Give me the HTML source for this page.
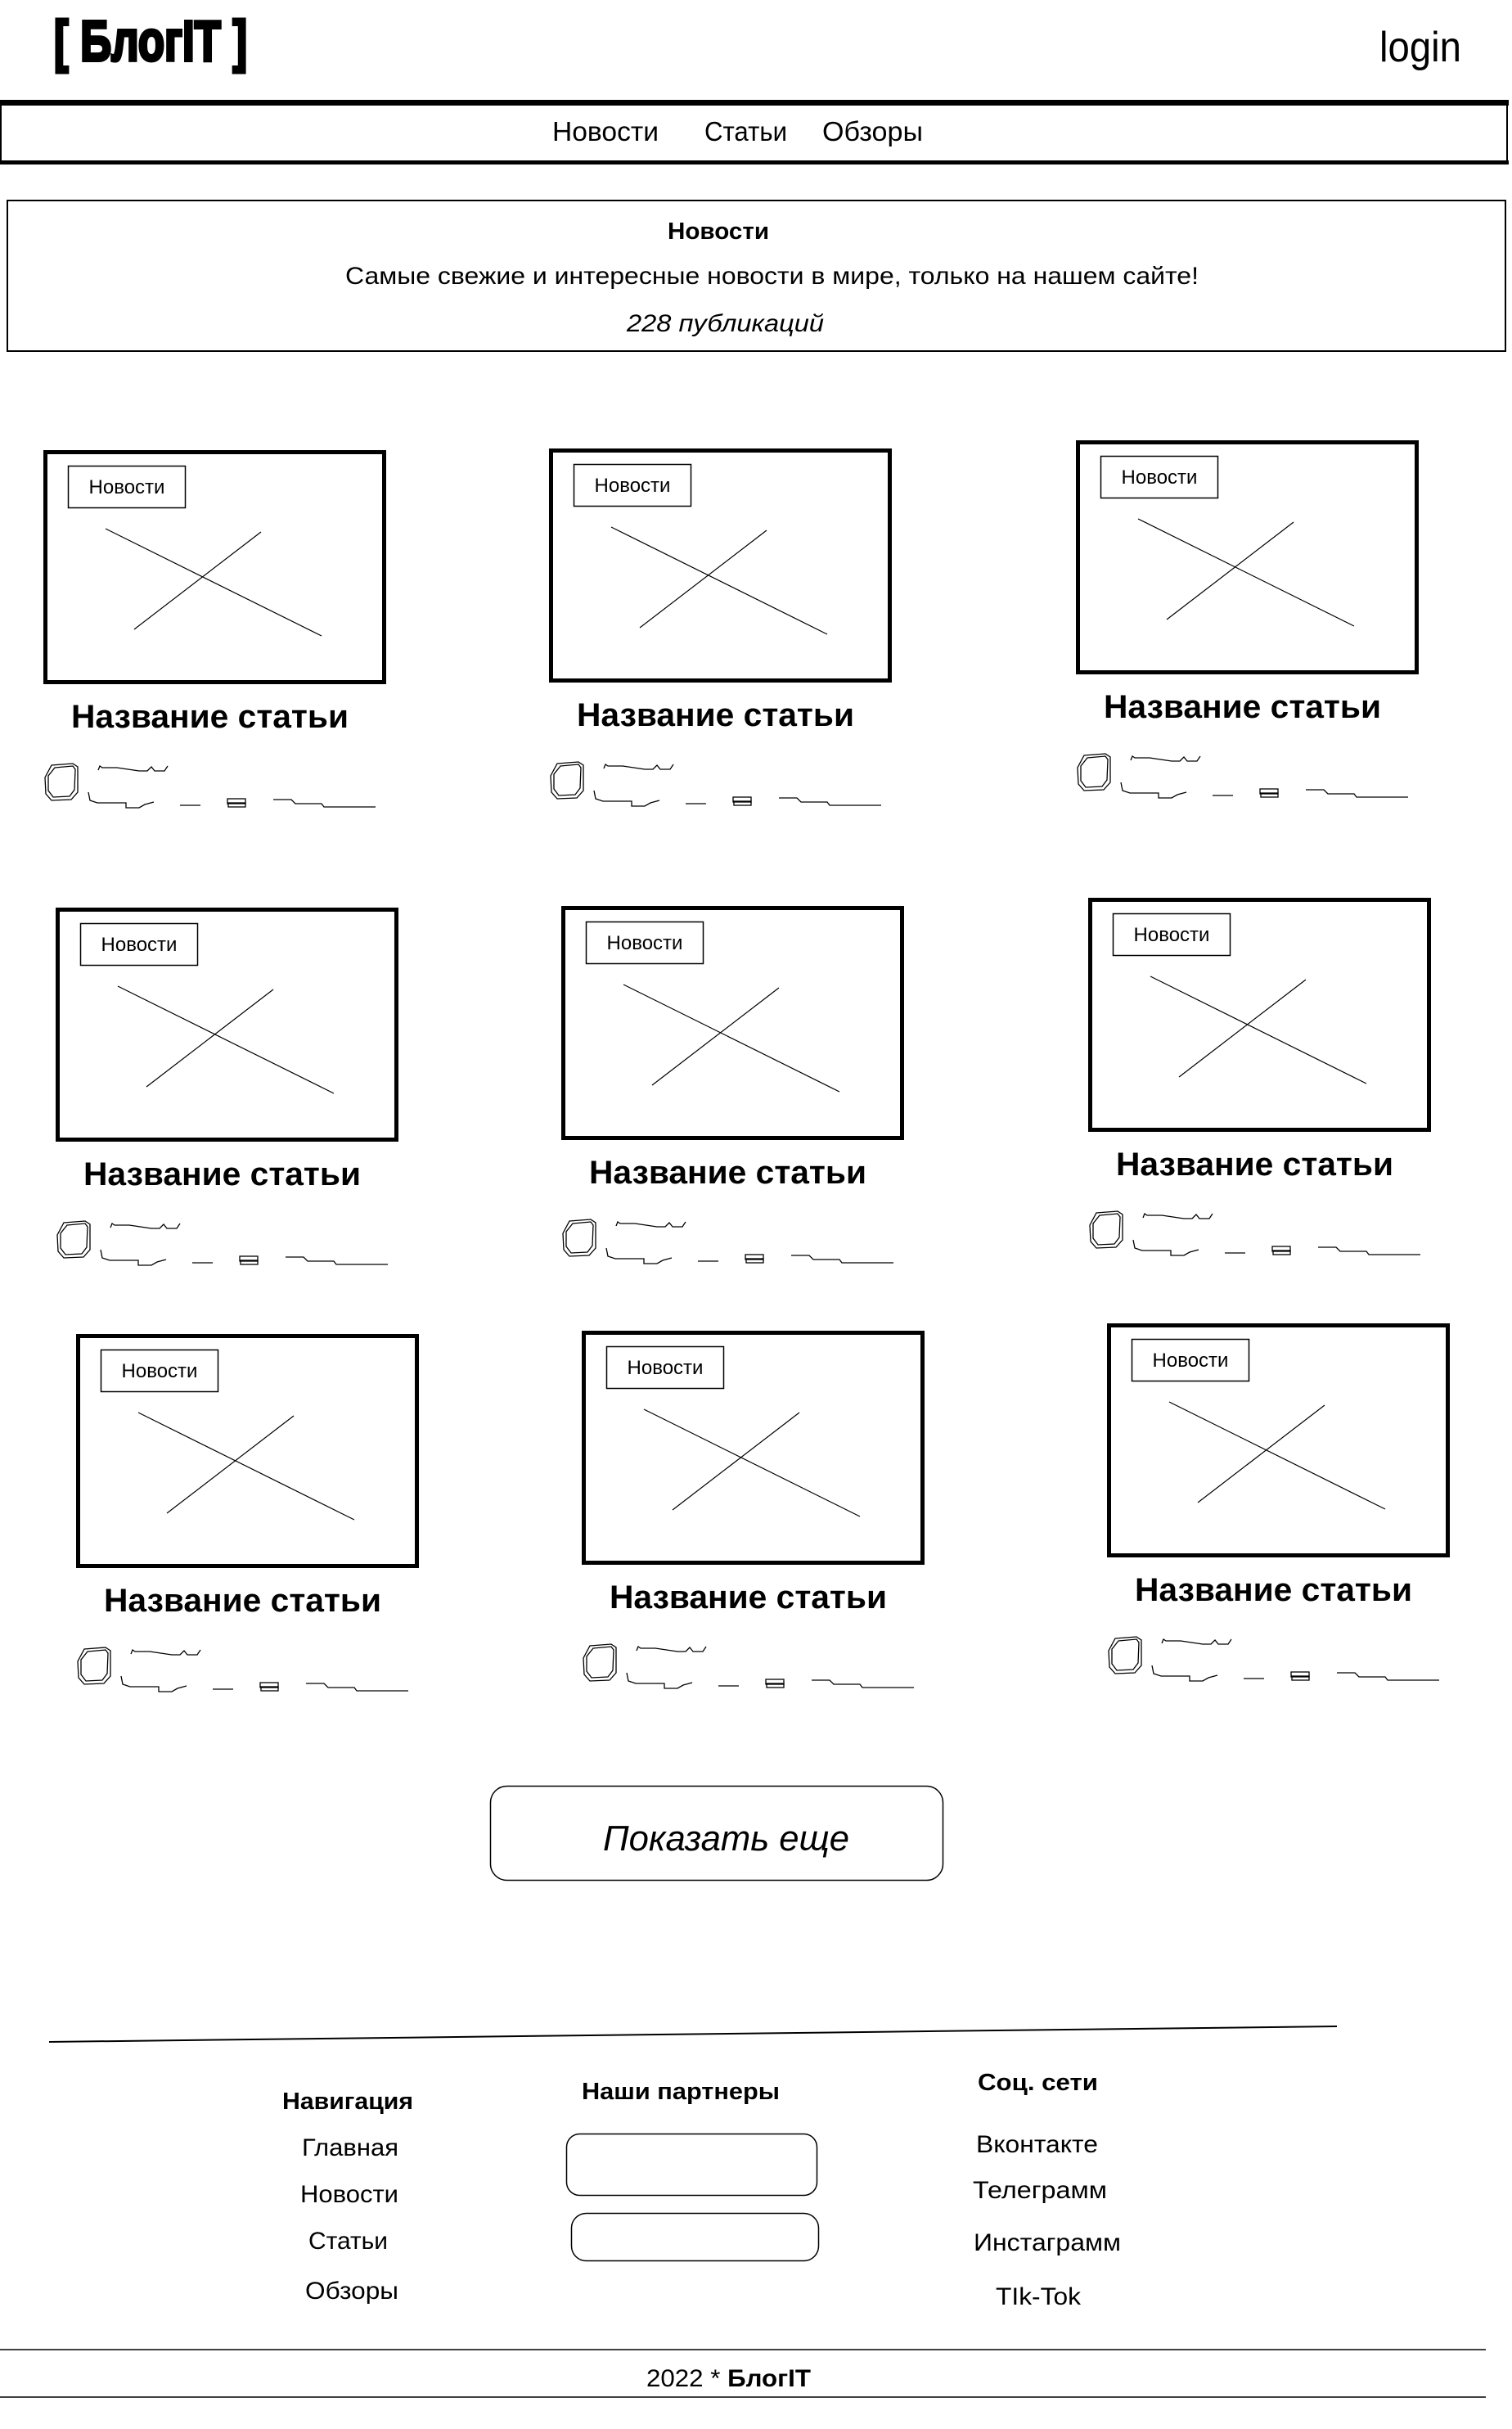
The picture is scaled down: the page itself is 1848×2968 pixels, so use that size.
<!DOCTYPE html>
<html><head><meta charset="utf-8"><style>
html,body{margin:0;padding:0;background:#fff;}
svg{display:block;font-family:"Liberation Sans","Noto Sans CJK SC",sans-serif;}
</style></head><body>
<svg width="1848" height="2968" viewBox="0 0 1848 2968" xmlns="http://www.w3.org/2000/svg">
<rect width="1848" height="2968" fill="#fff"/>
<!-- header -->
<text x="66" y="74" font-size="70" font-weight="bold" stroke="#000" stroke-width="4" stroke-linejoin="miter" textLength="236" lengthAdjust="spacingAndGlyphs">[ БлогIT ]</text>
<text x="1686" y="75" font-size="52" textLength="100" lengthAdjust="spacingAndGlyphs">login</text>
<rect x="0" y="122" width="1844" height="7" fill="#000"/>
<rect x="0" y="196" width="1844" height="5" fill="#000"/>
<rect x="0" y="122" width="2" height="79" fill="#000"/>
<rect x="1841" y="122" width="2" height="79" fill="#000"/>
<text x="675" y="172" font-size="33" textLength="130" lengthAdjust="spacingAndGlyphs">Новости</text>
<text x="861" y="172" font-size="33" textLength="101" lengthAdjust="spacingAndGlyphs">Статьи</text>
<text x="1005" y="172" font-size="33" textLength="123" lengthAdjust="spacingAndGlyphs">Обзоры</text>
<!-- info -->
<rect x="9" y="245" width="1831" height="184" fill="none" stroke="#000" stroke-width="2"/>
<text x="816" y="292" font-size="29" font-weight="bold" textLength="124" lengthAdjust="spacingAndGlyphs">Новости</text>
<text x="422" y="347" font-size="30" textLength="1043" lengthAdjust="spacingAndGlyphs">Самые свежие и интересные новости в мире, только на нашем сайте!</text>
<text x="766" y="405" font-size="30" font-style="italic" textLength="241" lengthAdjust="spacingAndGlyphs">228 публикаций</text>

<g id="cards" fill="none" stroke="#000">
<g transform="translate(53,550)">
<rect x="2.5" y="2.5" width="414" height="281" stroke-width="5"/><rect x="30.5" y="19.5" width="143" height="51" stroke-width="1.5"/>
<text x="102" y="53" font-size="24" text-anchor="middle" fill="#000" stroke="none">Новости</text>
<line x1="76" y1="96" x2="340" y2="227" stroke-width="1.2"/><line x1="266" y1="100" x2="111" y2="219" stroke-width="1.2"/>
<text x="34" y="339" font-size="40" font-weight="bold" fill="#000" stroke="none" textLength="339" lengthAdjust="spacingAndGlyphs">Название статьи</text>
<path d="M10,385 L36,383 L42,387 L42,418 L34,427 L10,428 L3,420 L2,400 Z M14,388 L36,386 L39,390 L38,415 L32,423 L12,424 L6,416 L6,398 Z" stroke-width="1.3"/>
<polyline points="67,391 69,386 72,388 90,388 117,392 127,392 132,387 136,392 148,392 152,386" stroke-width="1.3"/>
<polyline points="55,418 57,428 66,431 101,431 101,437 117,437 124,433 135,430" stroke-width="1.3"/>
<line x1="167" y1="434" x2="192" y2="434" stroke-width="1.3"/>
<rect x="225" y="426" width="22" height="6" stroke-width="1.3"/><rect x="226" y="431" width="21" height="5" stroke-width="1.3"/>
<polyline points="281,427 303,427 308,432 340,432 343,436 406,436" stroke-width="1.3"/>
</g>
<g transform="translate(671,548)">
<rect x="2.5" y="2.5" width="414" height="281" stroke-width="5"/><rect x="30.5" y="19.5" width="143" height="51" stroke-width="1.5"/>
<text x="102" y="53" font-size="24" text-anchor="middle" fill="#000" stroke="none">Новости</text>
<line x1="76" y1="96" x2="340" y2="227" stroke-width="1.2"/><line x1="266" y1="100" x2="111" y2="219" stroke-width="1.2"/>
<text x="34" y="339" font-size="40" font-weight="bold" fill="#000" stroke="none" textLength="339" lengthAdjust="spacingAndGlyphs">Название статьи</text>
<path d="M10,385 L36,383 L42,387 L42,418 L34,427 L10,428 L3,420 L2,400 Z M14,388 L36,386 L39,390 L38,415 L32,423 L12,424 L6,416 L6,398 Z" stroke-width="1.3"/>
<polyline points="67,391 69,386 72,388 90,388 117,392 127,392 132,387 136,392 148,392 152,386" stroke-width="1.3"/>
<polyline points="55,418 57,428 66,431 101,431 101,437 117,437 124,433 135,430" stroke-width="1.3"/>
<line x1="167" y1="434" x2="192" y2="434" stroke-width="1.3"/>
<rect x="225" y="426" width="22" height="6" stroke-width="1.3"/><rect x="226" y="431" width="21" height="5" stroke-width="1.3"/>
<polyline points="281,427 303,427 308,432 340,432 343,436 406,436" stroke-width="1.3"/>
</g>
<g transform="translate(1315,538)">
<rect x="2.5" y="2.5" width="414" height="281" stroke-width="5"/><rect x="30.5" y="19.5" width="143" height="51" stroke-width="1.5"/>
<text x="102" y="53" font-size="24" text-anchor="middle" fill="#000" stroke="none">Новости</text>
<line x1="76" y1="96" x2="340" y2="227" stroke-width="1.2"/><line x1="266" y1="100" x2="111" y2="219" stroke-width="1.2"/>
<text x="34" y="339" font-size="40" font-weight="bold" fill="#000" stroke="none" textLength="339" lengthAdjust="spacingAndGlyphs">Название статьи</text>
<path d="M10,385 L36,383 L42,387 L42,418 L34,427 L10,428 L3,420 L2,400 Z M14,388 L36,386 L39,390 L38,415 L32,423 L12,424 L6,416 L6,398 Z" stroke-width="1.3"/>
<polyline points="67,391 69,386 72,388 90,388 117,392 127,392 132,387 136,392 148,392 152,386" stroke-width="1.3"/>
<polyline points="55,418 57,428 66,431 101,431 101,437 117,437 124,433 135,430" stroke-width="1.3"/>
<line x1="167" y1="434" x2="192" y2="434" stroke-width="1.3"/>
<rect x="225" y="426" width="22" height="6" stroke-width="1.3"/><rect x="226" y="431" width="21" height="5" stroke-width="1.3"/>
<polyline points="281,427 303,427 308,432 340,432 343,436 406,436" stroke-width="1.3"/>
</g>
<g transform="translate(68,1109)">
<rect x="2.5" y="2.5" width="414" height="281" stroke-width="5"/><rect x="30.5" y="19.5" width="143" height="51" stroke-width="1.5"/>
<text x="102" y="53" font-size="24" text-anchor="middle" fill="#000" stroke="none">Новости</text>
<line x1="76" y1="96" x2="340" y2="227" stroke-width="1.2"/><line x1="266" y1="100" x2="111" y2="219" stroke-width="1.2"/>
<text x="34" y="339" font-size="40" font-weight="bold" fill="#000" stroke="none" textLength="339" lengthAdjust="spacingAndGlyphs">Название статьи</text>
<path d="M10,385 L36,383 L42,387 L42,418 L34,427 L10,428 L3,420 L2,400 Z M14,388 L36,386 L39,390 L38,415 L32,423 L12,424 L6,416 L6,398 Z" stroke-width="1.3"/>
<polyline points="67,391 69,386 72,388 90,388 117,392 127,392 132,387 136,392 148,392 152,386" stroke-width="1.3"/>
<polyline points="55,418 57,428 66,431 101,431 101,437 117,437 124,433 135,430" stroke-width="1.3"/>
<line x1="167" y1="434" x2="192" y2="434" stroke-width="1.3"/>
<rect x="225" y="426" width="22" height="6" stroke-width="1.3"/><rect x="226" y="431" width="21" height="5" stroke-width="1.3"/>
<polyline points="281,427 303,427 308,432 340,432 343,436 406,436" stroke-width="1.3"/>
</g>
<g transform="translate(686,1107)">
<rect x="2.5" y="2.5" width="414" height="281" stroke-width="5"/><rect x="30.5" y="19.5" width="143" height="51" stroke-width="1.5"/>
<text x="102" y="53" font-size="24" text-anchor="middle" fill="#000" stroke="none">Новости</text>
<line x1="76" y1="96" x2="340" y2="227" stroke-width="1.2"/><line x1="266" y1="100" x2="111" y2="219" stroke-width="1.2"/>
<text x="34" y="339" font-size="40" font-weight="bold" fill="#000" stroke="none" textLength="339" lengthAdjust="spacingAndGlyphs">Название статьи</text>
<path d="M10,385 L36,383 L42,387 L42,418 L34,427 L10,428 L3,420 L2,400 Z M14,388 L36,386 L39,390 L38,415 L32,423 L12,424 L6,416 L6,398 Z" stroke-width="1.3"/>
<polyline points="67,391 69,386 72,388 90,388 117,392 127,392 132,387 136,392 148,392 152,386" stroke-width="1.3"/>
<polyline points="55,418 57,428 66,431 101,431 101,437 117,437 124,433 135,430" stroke-width="1.3"/>
<line x1="167" y1="434" x2="192" y2="434" stroke-width="1.3"/>
<rect x="225" y="426" width="22" height="6" stroke-width="1.3"/><rect x="226" y="431" width="21" height="5" stroke-width="1.3"/>
<polyline points="281,427 303,427 308,432 340,432 343,436 406,436" stroke-width="1.3"/>
</g>
<g transform="translate(1330,1097)">
<rect x="2.5" y="2.5" width="414" height="281" stroke-width="5"/><rect x="30.5" y="19.5" width="143" height="51" stroke-width="1.5"/>
<text x="102" y="53" font-size="24" text-anchor="middle" fill="#000" stroke="none">Новости</text>
<line x1="76" y1="96" x2="340" y2="227" stroke-width="1.2"/><line x1="266" y1="100" x2="111" y2="219" stroke-width="1.2"/>
<text x="34" y="339" font-size="40" font-weight="bold" fill="#000" stroke="none" textLength="339" lengthAdjust="spacingAndGlyphs">Название статьи</text>
<path d="M10,385 L36,383 L42,387 L42,418 L34,427 L10,428 L3,420 L2,400 Z M14,388 L36,386 L39,390 L38,415 L32,423 L12,424 L6,416 L6,398 Z" stroke-width="1.3"/>
<polyline points="67,391 69,386 72,388 90,388 117,392 127,392 132,387 136,392 148,392 152,386" stroke-width="1.3"/>
<polyline points="55,418 57,428 66,431 101,431 101,437 117,437 124,433 135,430" stroke-width="1.3"/>
<line x1="167" y1="434" x2="192" y2="434" stroke-width="1.3"/>
<rect x="225" y="426" width="22" height="6" stroke-width="1.3"/><rect x="226" y="431" width="21" height="5" stroke-width="1.3"/>
<polyline points="281,427 303,427 308,432 340,432 343,436 406,436" stroke-width="1.3"/>
</g>
<g transform="translate(93,1630)">
<rect x="2.5" y="2.5" width="414" height="281" stroke-width="5"/><rect x="30.5" y="19.5" width="143" height="51" stroke-width="1.5"/>
<text x="102" y="53" font-size="24" text-anchor="middle" fill="#000" stroke="none">Новости</text>
<line x1="76" y1="96" x2="340" y2="227" stroke-width="1.2"/><line x1="266" y1="100" x2="111" y2="219" stroke-width="1.2"/>
<text x="34" y="339" font-size="40" font-weight="bold" fill="#000" stroke="none" textLength="339" lengthAdjust="spacingAndGlyphs">Название статьи</text>
<path d="M10,385 L36,383 L42,387 L42,418 L34,427 L10,428 L3,420 L2,400 Z M14,388 L36,386 L39,390 L38,415 L32,423 L12,424 L6,416 L6,398 Z" stroke-width="1.3"/>
<polyline points="67,391 69,386 72,388 90,388 117,392 127,392 132,387 136,392 148,392 152,386" stroke-width="1.3"/>
<polyline points="55,418 57,428 66,431 101,431 101,437 117,437 124,433 135,430" stroke-width="1.3"/>
<line x1="167" y1="434" x2="192" y2="434" stroke-width="1.3"/>
<rect x="225" y="426" width="22" height="6" stroke-width="1.3"/><rect x="226" y="431" width="21" height="5" stroke-width="1.3"/>
<polyline points="281,427 303,427 308,432 340,432 343,436 406,436" stroke-width="1.3"/>
</g>
<g transform="translate(711,1626)">
<rect x="2.5" y="2.5" width="414" height="281" stroke-width="5"/><rect x="30.5" y="19.5" width="143" height="51" stroke-width="1.5"/>
<text x="102" y="53" font-size="24" text-anchor="middle" fill="#000" stroke="none">Новости</text>
<line x1="76" y1="96" x2="340" y2="227" stroke-width="1.2"/><line x1="266" y1="100" x2="111" y2="219" stroke-width="1.2"/>
<text x="34" y="339" font-size="40" font-weight="bold" fill="#000" stroke="none" textLength="339" lengthAdjust="spacingAndGlyphs">Название статьи</text>
<path d="M10,385 L36,383 L42,387 L42,418 L34,427 L10,428 L3,420 L2,400 Z M14,388 L36,386 L39,390 L38,415 L32,423 L12,424 L6,416 L6,398 Z" stroke-width="1.3"/>
<polyline points="67,391 69,386 72,388 90,388 117,392 127,392 132,387 136,392 148,392 152,386" stroke-width="1.3"/>
<polyline points="55,418 57,428 66,431 101,431 101,437 117,437 124,433 135,430" stroke-width="1.3"/>
<line x1="167" y1="434" x2="192" y2="434" stroke-width="1.3"/>
<rect x="225" y="426" width="22" height="6" stroke-width="1.3"/><rect x="226" y="431" width="21" height="5" stroke-width="1.3"/>
<polyline points="281,427 303,427 308,432 340,432 343,436 406,436" stroke-width="1.3"/>
</g>
<g transform="translate(1353,1617)">
<rect x="2.5" y="2.5" width="414" height="281" stroke-width="5"/><rect x="30.5" y="19.5" width="143" height="51" stroke-width="1.5"/>
<text x="102" y="53" font-size="24" text-anchor="middle" fill="#000" stroke="none">Новости</text>
<line x1="76" y1="96" x2="340" y2="227" stroke-width="1.2"/><line x1="266" y1="100" x2="111" y2="219" stroke-width="1.2"/>
<text x="34" y="339" font-size="40" font-weight="bold" fill="#000" stroke="none" textLength="339" lengthAdjust="spacingAndGlyphs">Название статьи</text>
<path d="M10,385 L36,383 L42,387 L42,418 L34,427 L10,428 L3,420 L2,400 Z M14,388 L36,386 L39,390 L38,415 L32,423 L12,424 L6,416 L6,398 Z" stroke-width="1.3"/>
<polyline points="67,391 69,386 72,388 90,388 117,392 127,392 132,387 136,392 148,392 152,386" stroke-width="1.3"/>
<polyline points="55,418 57,428 66,431 101,431 101,437 117,437 124,433 135,430" stroke-width="1.3"/>
<line x1="167" y1="434" x2="192" y2="434" stroke-width="1.3"/>
<rect x="225" y="426" width="22" height="6" stroke-width="1.3"/><rect x="226" y="431" width="21" height="5" stroke-width="1.3"/>
<polyline points="281,427 303,427 308,432 340,432 343,436 406,436" stroke-width="1.3"/>
</g>
</g>

<!-- button -->
<rect x="599.5" y="2182.5" width="553" height="115" rx="20" fill="none" stroke="#000" stroke-width="1.5"/>
<text x="737" y="2261" font-size="44" font-style="italic" textLength="301" lengthAdjust="spacingAndGlyphs">Показать еще</text>

<!-- footer -->
<line x1="60" y1="2495" x2="1634" y2="2476" stroke="#000" stroke-width="2"/>
<text x="345" y="2577" font-size="29" font-weight="bold" textLength="160" lengthAdjust="spacingAndGlyphs">Навигация</text>
<text x="369" y="2634" font-size="30" textLength="118" lengthAdjust="spacingAndGlyphs">Главная</text>
<text x="367" y="2691" font-size="30" textLength="120" lengthAdjust="spacingAndGlyphs">Новости</text>
<text x="377" y="2748" font-size="30" textLength="97" lengthAdjust="spacingAndGlyphs">Статьи</text>
<text x="373" y="2809" font-size="30" textLength="114" lengthAdjust="spacingAndGlyphs">Обзоры</text>
<text x="711" y="2565" font-size="29" font-weight="bold" textLength="242" lengthAdjust="spacingAndGlyphs">Наши партнеры</text>
<rect x="692.5" y="2607.5" width="306" height="75" rx="16" fill="none" stroke="#000" stroke-width="1.5"/>
<rect x="698.5" y="2704.5" width="302" height="58" rx="18" fill="none" stroke="#000" stroke-width="1.5"/>
<text x="1195" y="2554" font-size="29" font-weight="bold" textLength="147" lengthAdjust="spacingAndGlyphs">Соц. сети</text>
<text x="1193" y="2630" font-size="30" textLength="149" lengthAdjust="spacingAndGlyphs">Вконтакте</text>
<text x="1189" y="2686" font-size="30" textLength="164" lengthAdjust="spacingAndGlyphs">Телеграмм</text>
<text x="1190" y="2750" font-size="30" textLength="180" lengthAdjust="spacingAndGlyphs">Инстаграмм</text>
<text x="1217" y="2816" font-size="30" textLength="104" lengthAdjust="spacingAndGlyphs">TIk-Tok</text>
<line x1="0" y1="2871" x2="1816" y2="2871" stroke="#000" stroke-width="1.5"/>
<line x1="0" y1="2929" x2="1816" y2="2929" stroke="#000" stroke-width="1.5"/>
<text x="790" y="2916" font-size="30" textLength="201" lengthAdjust="spacingAndGlyphs">2022 * <tspan font-weight="bold">БлогIT</tspan></text>
</svg>
</body></html>
